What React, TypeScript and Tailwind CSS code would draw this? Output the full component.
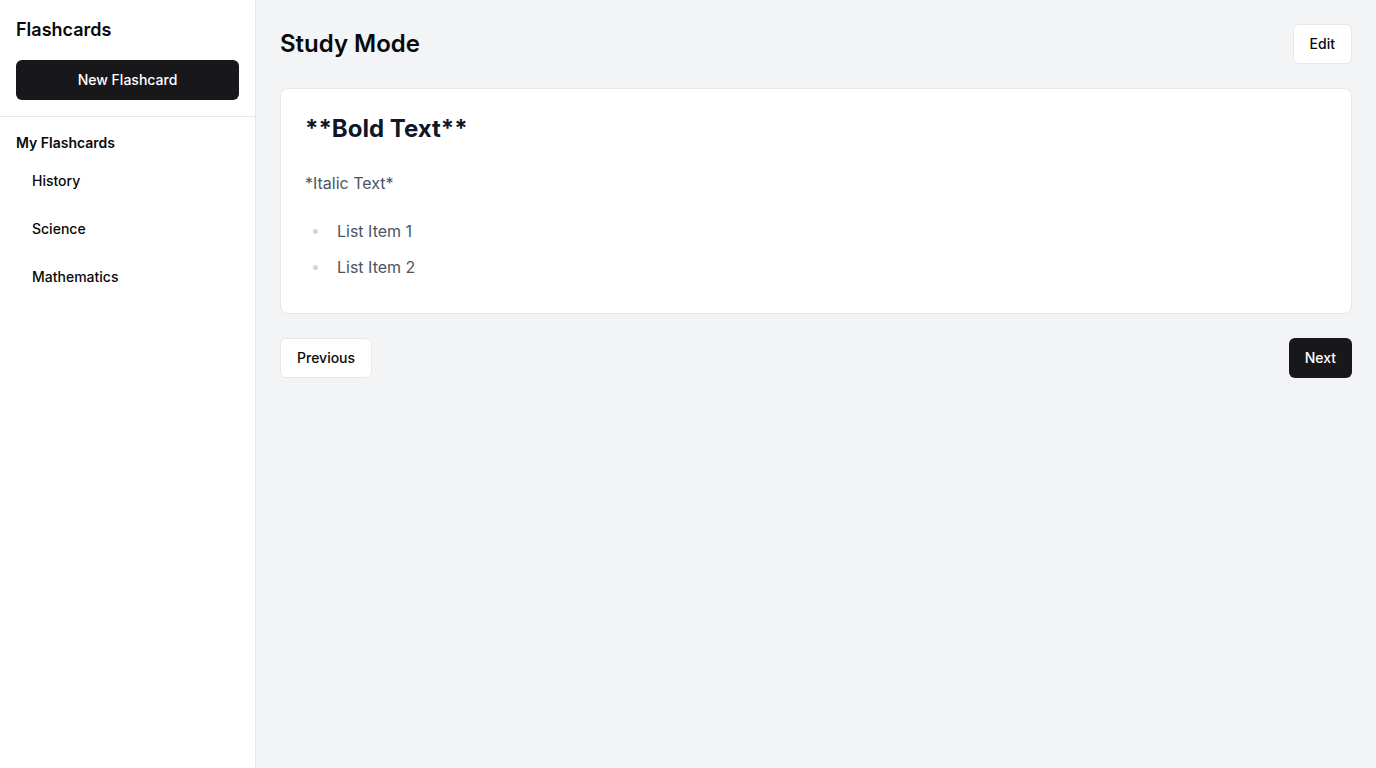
export default function App() {
    const decks = ["History", "Science", "Mathematics"];

    return (
        <div className="min-h-screen flex bg-gray-100 text-[#09090b] font-['Inter',sans-serif]">
            <aside className="w-64 shrink-0 bg-white border-r border-gray-200 flex flex-col">
                <div className="p-4 border-b border-gray-200">
                    <h1 className="text-lg font-semibold leading-7 mb-4">Flashcards</h1>
                    <button className="w-full h-10 rounded-md bg-[#18181b] text-white text-sm font-medium">
                        New Flashcard
                    </button>
                </div>

                <div className="px-4 pt-4">
                    <h2 className="text-sm font-semibold leading-5">My Flashcards</h2>
                    <nav className="mt-[6px] flex flex-col gap-1">
                        {decks.map((deck) => (
                            <a key={deck} href="#" className="px-4 py-3 text-sm font-medium leading-5 rounded-md">
                                {deck}
                            </a>
                        ))}
                    </nav>
                </div>
            </aside>

            <main className="flex-1 p-6">
                <div className="flex items-center justify-between">
                    <h1 className="text-2xl font-semibold leading-8">Study Mode</h1>
                    <button className="h-10 px-4 rounded-md border border-gray-200 bg-white text-sm font-medium">
                        Edit
                    </button>
                </div>

                <div className="mt-6 bg-white border border-gray-200 rounded-lg px-6 pt-6 pb-[34px]">
                    <h2 className="text-2xl font-bold leading-8 text-gray-900">**Bold Text**</h2>
                    <p className="mt-[26px] text-base leading-6 text-gray-600">*Italic Text*</p>
                    <ul className="mt-6 flex flex-col gap-3 text-base leading-6 text-gray-600">
                        <li className="flex items-center">
                            <span className="w-[5px] h-[5px] rounded-full bg-gray-300 ml-[8px] mr-[19px]" />
                            List Item 1
                        </li>
                        <li className="flex items-center">
                            <span className="w-[5px] h-[5px] rounded-full bg-gray-300 ml-[8px] mr-[19px]" />
                            List Item 2
                        </li>
                    </ul>
                </div>

                <div className="mt-6 flex items-center justify-between">
                    <button className="h-10 px-4 rounded-md border border-gray-200 bg-white text-sm font-medium">
                        Previous
                    </button>
                    <button className="h-10 px-4 rounded-md bg-[#18181b] text-white text-sm font-medium">
                        Next
                    </button>
                </div>
            </main>
        </div>
    );
}
